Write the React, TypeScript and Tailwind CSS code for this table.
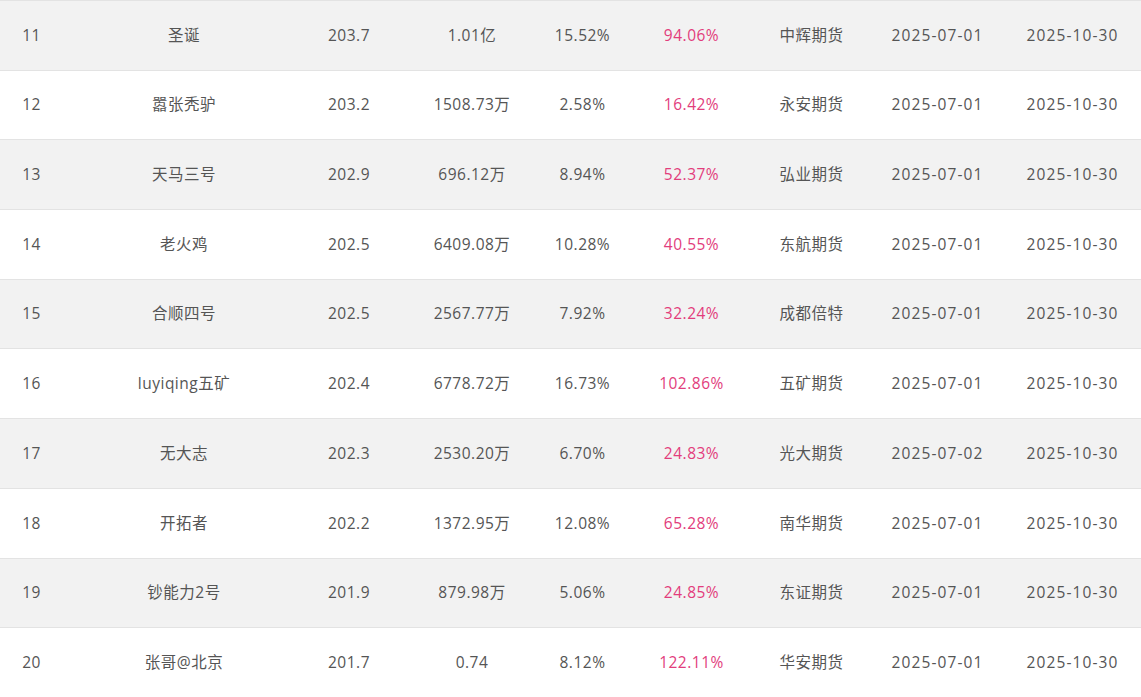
const rows = [
  ["11", "圣诞", "203.7", "1.01亿", "15.52%", "94.06%", "中辉期货", "2025-07-01", "2025-10-30"],
  ["12", "嚣张秃驴", "203.2", "1508.73万", "2.58%", "16.42%", "永安期货", "2025-07-01", "2025-10-30"],
  ["13", "天马三号", "202.9", "696.12万", "8.94%", "52.37%", "弘业期货", "2025-07-01", "2025-10-30"],
  ["14", "老火鸡", "202.5", "6409.08万", "10.28%", "40.55%", "东航期货", "2025-07-01", "2025-10-30"],
  ["15", "合顺四号", "202.5", "2567.77万", "7.92%", "32.24%", "成都倍特", "2025-07-01", "2025-10-30"],
  ["16", "luyiqing五矿", "202.4", "6778.72万", "16.73%", "102.86%", "五矿期货", "2025-07-01", "2025-10-30"],
  ["17", "无大志", "202.3", "2530.20万", "6.70%", "24.83%", "光大期货", "2025-07-02", "2025-10-30"],
  ["18", "开拓者", "202.2", "1372.95万", "12.08%", "65.28%", "南华期货", "2025-07-01", "2025-10-30"],
  ["19", "钞能力2号", "201.9", "879.98万", "5.06%", "24.85%", "东证期货", "2025-07-01", "2025-10-30"],
  ["20", "张哥@北京", "201.7", "0.74", "8.12%", "122.11%", "华安期货", "2025-07-01", "2025-10-30"],
];

export default function App() {
  return (
    <div className="w-[1141px] h-[697px] overflow-hidden bg-white font-['Open_Sans','Noto_Sans_CJK_SC',sans-serif] text-[15.5px] text-[#555]">
      {rows.map((r, i) => (
        <div
          key={r[0]}
          className={`grid grid-cols-[63px_242px_88px_158px_63px_155px_85px_167px_103px_1fr] items-center h-[69.7px] border-t border-[#e3e3e3] ${
            i % 2 === 0 ? "bg-[#f2f2f2]" : "bg-white"
          }`}
        >
          {r.map((c, j) => (
            <div
              key={j}
              className={`flex justify-center whitespace-nowrap ${j === 5 ? "text-[#e23d7c]" : ""} ${
                j >= 7 ? "tracking-[1.1px]" : "tracking-[0.5px]"
              }`}
            >
              {c}
            </div>
          ))}
          <div />
        </div>
      ))}
    </div>
  );
}
